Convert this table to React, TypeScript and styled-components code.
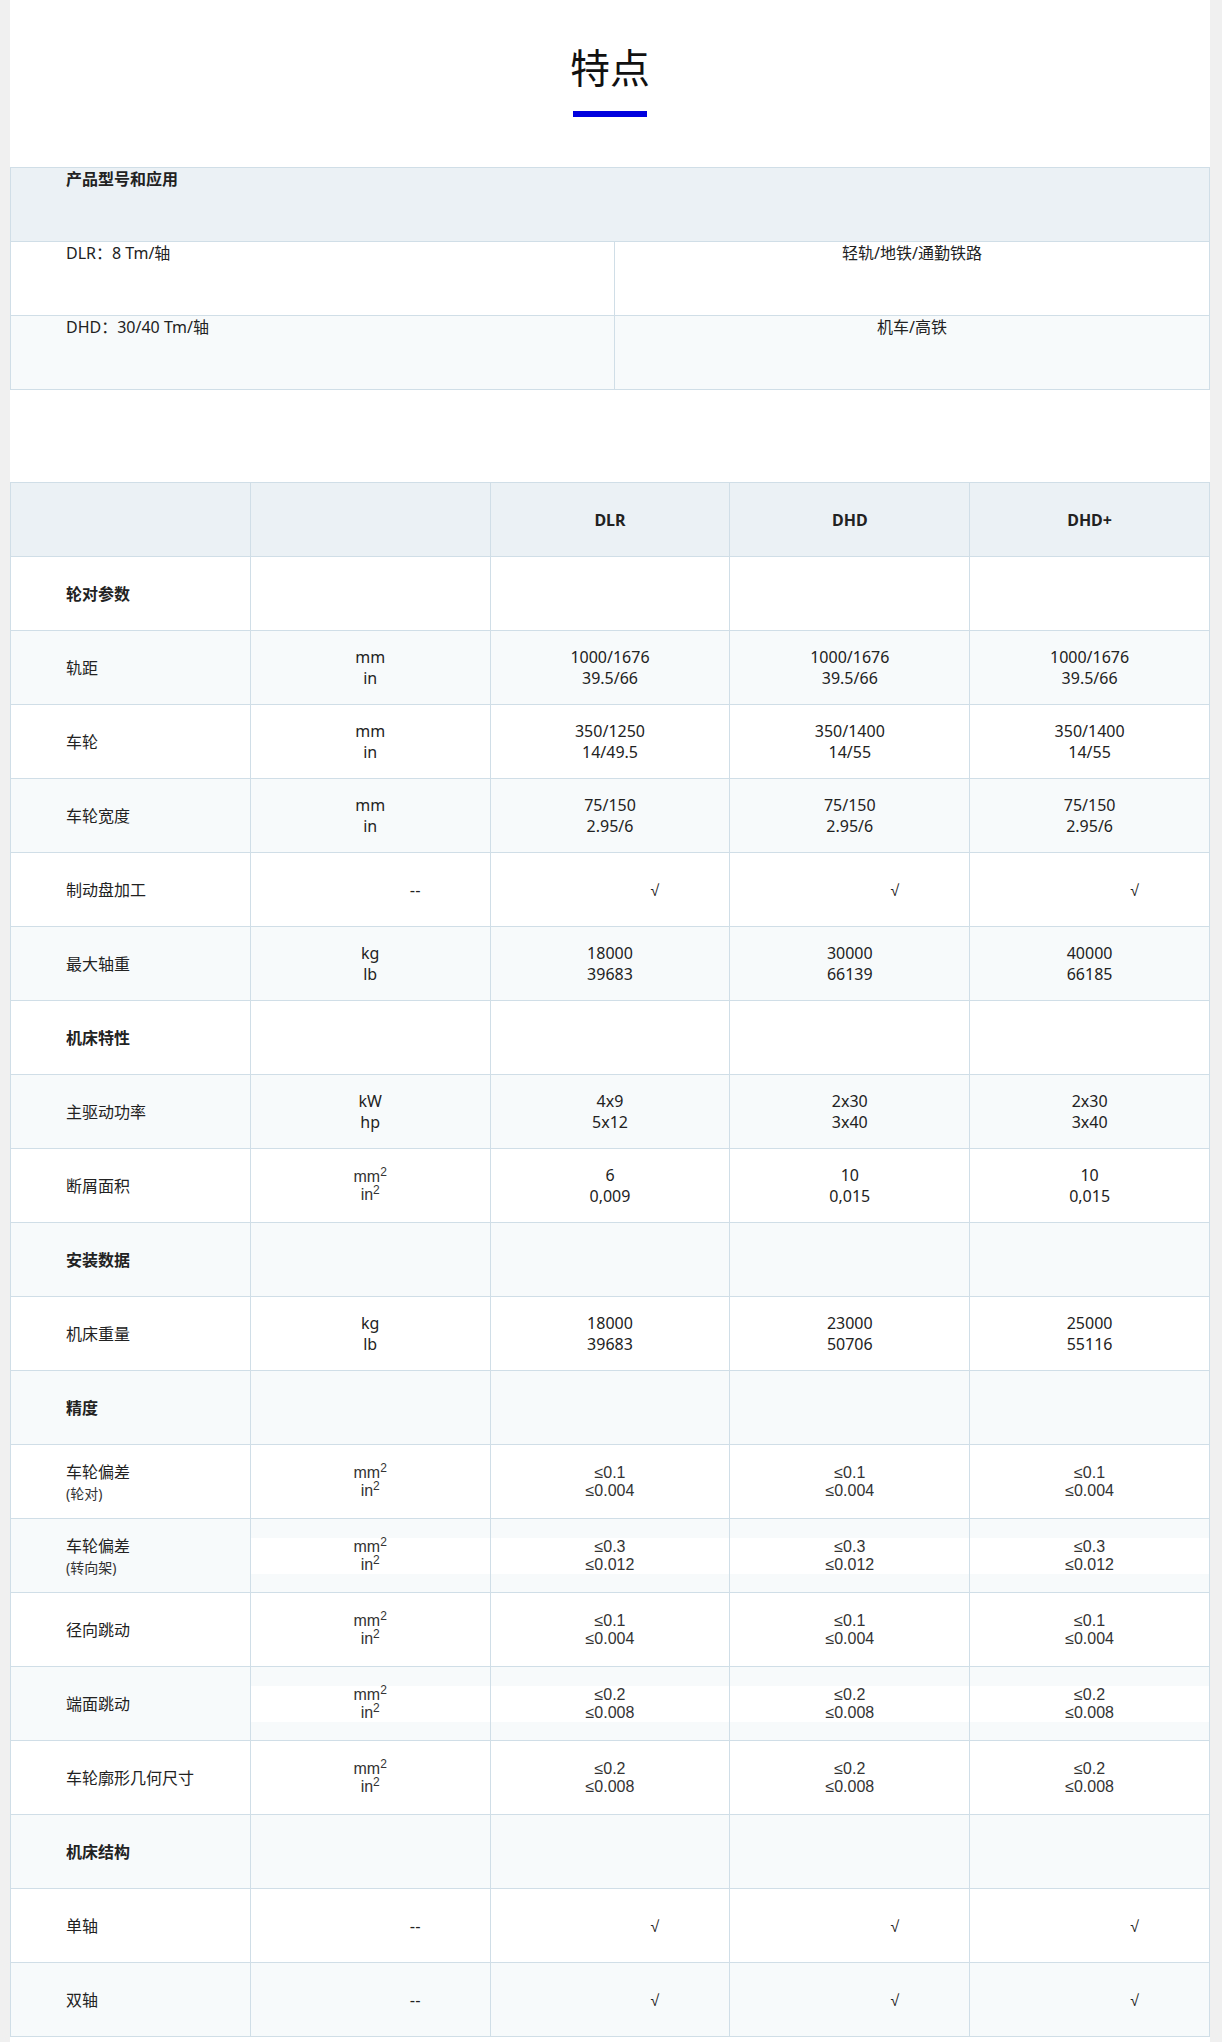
import React from 'react';
import styled, { createGlobalStyle } from 'styled-components';

const BORDER = '#d0dee7';
const HEAD_BG = '#ebf1f5';
const TINT_BG = '#f7fafb';

const GlobalStyle = createGlobalStyle`
  html, body { margin: 0; padding: 0; background: #f0f0f0; }
  body {
    font-family: "Noto Sans", "Noto Sans CJK SC", sans-serif;
    color: #222;
  }
`;

const Page = styled.main`
  width: 1200px;
  margin: 0 0 0 10px;
  background: #fff;
  padding-bottom: 8px;
`;

const Header = styled.header`
  padding-top: 46px;
  display: flex;
  flex-direction: column;
  align-items: center;
`;

const Title = styled.h2`
  margin: 0;
  font-family: "Noto Sans CJK SC", sans-serif;
  font-size: 40px;
  line-height: 40px;
  font-weight: 400;
  color: #111;
`;

const TitleBar = styled.span`
  display: block;
  width: 74px;
  height: 6px;
  margin-top: 25px;
  background: #0000de;
`;

const Grid = styled.section<{ $mt: number }>`
  margin-top: ${(p) => p.$mt}px;
  border-top: 1px solid ${BORDER};
  border-left: 1px solid ${BORDER};
`;

const Row = styled.div<{ $cols: string; $bg: string }>`
  display: grid;
  grid-template-columns: ${(p) => p.$cols};
  height: 74px;
  box-sizing: border-box;
  border-bottom: 1px solid ${BORDER};
  background: ${(p) => p.$bg};
`;

const Cell = styled.div<{
  $align: 'left' | 'center';
  $top?: boolean;
  $shift?: boolean;
  $nudge?: number;
}>`
  border-right: 1px solid ${BORDER};
  min-width: 0;
  display: flex;
  flex-direction: column;
  justify-content: ${(p) => (p.$top ? 'flex-start' : 'center')};
  align-items: ${(p) => (p.$align === 'left' ? 'flex-start' : 'center')};
  padding-top: ${(p) => p.$nudge ?? 0}px;
  padding-left: ${(p) => (p.$align === 'left' ? '55px' : p.$shift ? '90px' : '0')};
  font-size: 16px;
  line-height: 21px;
  color: #222;
`;

const Line = styled.span<{ $bold?: boolean }>`
  display: block;
  font-weight: ${(p) => (p.$bold ? 700 : 400)};
  white-space: nowrap;
`;

const SubLine = styled.span`
  display: block;
  font-size: 14px;
  line-height: 21px;
  color: #333;
`;

const ArialBlock = styled.div`
  align-self: stretch;
  background: #fff;
  font-family: "Liberation Sans", Arial, sans-serif;
  font-size: 16px;
  line-height: 18px;
  color: #333;
  text-align: center;
`;

const ArialLine = styled.span`
  display: block;
  white-space: nowrap;
`;

const Sup = styled.sup`
  font-size: 12px;
  line-height: 0;
  vertical-align: 6px;
`;

const Mark = styled.span`
  font-family: "Liberation Sans", Arial, sans-serif;
  font-size: 16px;
  line-height: 21px;
  color: #222;
`;

type Content =
  | { t: 'text'; lines: string[] }
  | { t: 'sq' }
  | { t: 'le'; lines: string[] }
  | { t: 'mark'; v: string };

type SpecRow =
  | { kind: 'section'; label: string }
  | { kind: 'data'; label: string; sub?: string; unit: Content; values: Content[] };

const txt = (...lines: string[]): Content => ({ t: 'text', lines });
const le = (...lines: string[]): Content => ({ t: 'le', lines });
const SQ: Content = { t: 'sq' };
const DASH: Content = { t: 'mark', v: '--' };
const CHECK: Content = { t: 'mark', v: '√' };
const mmin = txt('mm', 'in');
const same = (c: Content): Content[] => [c, c, c];

const rows: SpecRow[] = [
  { kind: 'section', label: '轮对参数' },
  { kind: 'data', label: '轨距', unit: mmin, values: same(txt('1000/1676', '39.5/66')) },
  {
    kind: 'data',
    label: '车轮',
    unit: mmin,
    values: [txt('350/1250', '14/49.5'), txt('350/1400', '14/55'), txt('350/1400', '14/55')],
  },
  { kind: 'data', label: '车轮宽度', unit: mmin, values: same(txt('75/150', '2.95/6')) },
  { kind: 'data', label: '制动盘加工', unit: DASH, values: same(CHECK) },
  {
    kind: 'data',
    label: '最大轴重',
    unit: txt('kg', 'lb'),
    values: [txt('18000', '39683'), txt('30000', '66139'), txt('40000', '66185')],
  },
  { kind: 'section', label: '机床特性' },
  {
    kind: 'data',
    label: '主驱动功率',
    unit: txt('kW', 'hp'),
    values: [txt('4x9', '5x12'), txt('2x30', '3x40'), txt('2x30', '3x40')],
  },
  {
    kind: 'data',
    label: '断屑面积',
    unit: SQ,
    values: [txt('6', '0,009'), txt('10', '0,015'), txt('10', '0,015')],
  },
  { kind: 'section', label: '安装数据' },
  {
    kind: 'data',
    label: '机床重量',
    unit: txt('kg', 'lb'),
    values: [txt('18000', '39683'), txt('23000', '50706'), txt('25000', '55116')],
  },
  { kind: 'section', label: '精度' },
  { kind: 'data', label: '车轮偏差', sub: '(轮对)', unit: SQ, values: same(le('≤0.1', '≤0.004')) },
  { kind: 'data', label: '车轮偏差', sub: '(转向架)', unit: SQ, values: same(le('≤0.3', '≤0.012')) },
  { kind: 'data', label: '径向跳动', unit: SQ, values: same(le('≤0.1', '≤0.004')) },
  { kind: 'data', label: '端面跳动', unit: SQ, values: same(le('≤0.2', '≤0.008')) },
  { kind: 'data', label: '车轮廓形几何尺寸', unit: SQ, values: same(le('≤0.2', '≤0.008')) },
  { kind: 'section', label: '机床结构' },
  { kind: 'data', label: '单轴', unit: DASH, values: same(CHECK) },
  { kind: 'data', label: '双轴', unit: DASH, values: same(CHECK) },
];

const COLS5 = 'repeat(5, 1fr)';

function ValueCell({ c }: { c: Content }) {
  if (c.t === 'mark') {
    return (
      <Cell $align="center" $shift $nudge={2}>
        <Mark>{c.v}</Mark>
      </Cell>
    );
  }
  if (c.t === 'sq') {
    return (
      <Cell $align="center">
        <ArialBlock>
          <ArialLine>
            mm<Sup>2</Sup>
          </ArialLine>
          <ArialLine>
            in<Sup>2</Sup>
          </ArialLine>
        </ArialBlock>
      </Cell>
    );
  }
  if (c.t === 'le') {
    return (
      <Cell $align="center">
        <ArialBlock>
          {c.lines.map((l, i) => (
            <ArialLine key={i}>{l}</ArialLine>
          ))}
        </ArialBlock>
      </Cell>
    );
  }
  return (
    <Cell $align="center">
      {c.lines.map((l, i) => (
        <Line key={i}>{l}</Line>
      ))}
    </Cell>
  );
}

export default function App() {
  return (
    <>
      <GlobalStyle />
      <Page>
        <Header>
          <Title>特点</Title>
          <TitleBar />
        </Header>

        <Grid $mt={50}>
          <Row $cols="1fr" $bg={HEAD_BG}>
            <Cell $align="left" $top $nudge={1}>
              <Line $bold>产品型号和应用</Line>
            </Cell>
          </Row>
          <Row $cols="604px 1fr" $bg="#fff">
            <Cell $align="left" $top $nudge={1}>
              <Line>DLR：8 Tm/轴</Line>
            </Cell>
            <Cell $align="center" $top $nudge={1}>
              <Line>轻轨/地铁/通勤铁路</Line>
            </Cell>
          </Row>
          <Row $cols="604px 1fr" $bg={TINT_BG}>
            <Cell $align="left" $top $nudge={1}>
              <Line>DHD：30/40 Tm/轴</Line>
            </Cell>
            <Cell $align="center" $top $nudge={1}>
              <Line>机车/高铁</Line>
            </Cell>
          </Row>
        </Grid>

        <Grid $mt={92}>
          <Row $cols={COLS5} $bg={HEAD_BG}>
            <Cell $align="center" />
            <Cell $align="center" />
            <Cell $align="center" $nudge={2}>
              <Line $bold>DLR</Line>
            </Cell>
            <Cell $align="center" $nudge={2}>
              <Line $bold>DHD</Line>
            </Cell>
            <Cell $align="center" $nudge={2}>
              <Line $bold>DHD+</Line>
            </Cell>
          </Row>
          {rows.map((r, i) => {
            const bg = i % 2 === 1 ? TINT_BG : '#fff';
            if (r.kind === 'section') {
              return (
                <Row key={i} $cols={COLS5} $bg={bg}>
                  <Cell $align="left" $nudge={2}>
                    <Line $bold>{r.label}</Line>
                  </Cell>
                  <Cell $align="center" />
                  <Cell $align="center" />
                  <Cell $align="center" />
                  <Cell $align="center" />
                </Row>
              );
            }
            return (
              <Row key={i} $cols={COLS5} $bg={bg}>
                <Cell $align="left" $nudge={2}>
                  <Line>{r.label}</Line>
                  {r.sub && <SubLine>{r.sub}</SubLine>}
                </Cell>
                <ValueCell c={r.unit} />
                {r.values.map((v, j) => (
                  <ValueCell key={j} c={v} />
                ))}
              </Row>
            );
          })}
        </Grid>
      </Page>
    </>
  );
}
